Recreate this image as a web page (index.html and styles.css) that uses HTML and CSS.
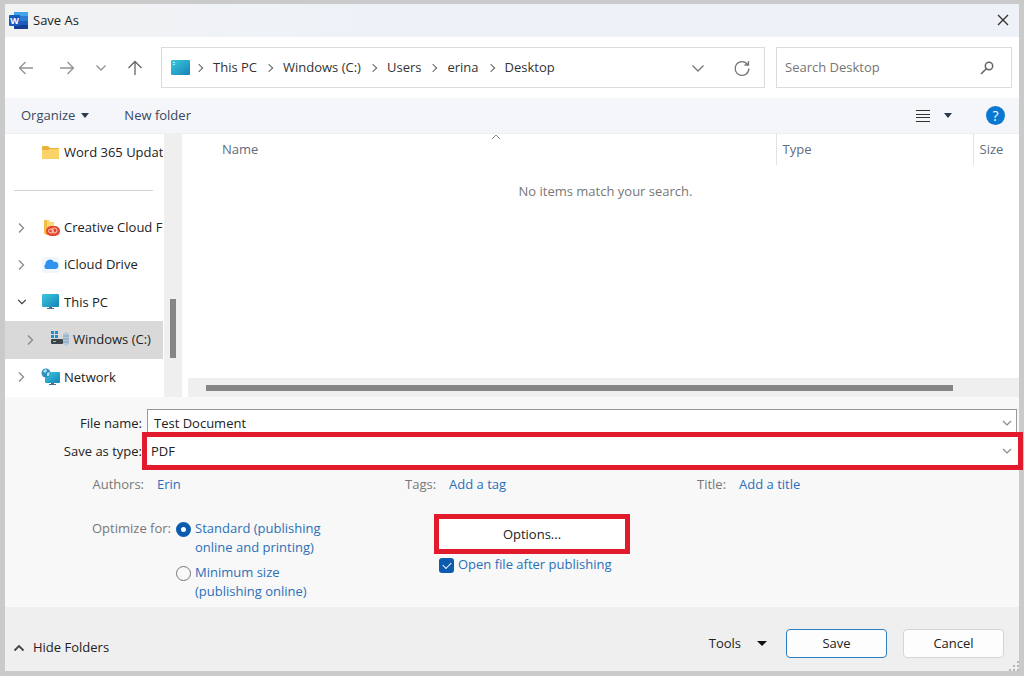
FILE: index.html
```html
<!DOCTYPE html>
<html lang="en">
<head>
  <meta charset="UTF-8" />
  <meta name="viewport" content="width=device-width, initial-scale=1.0"/>
  <title>Save As</title>
  <link rel="stylesheet" href="styles.css">
</head>
<body>
  <div class="dialog">
    <header class="titlebar">
      <svg class="word-icon" width="20" height="18" viewBox="0 0 20 18">
        <rect x="5" y="0" width="14" height="17" rx="1" fill="#1b5cbe"/>
        <path d="M6 0h12a1 1 0 0 1 1 1v4H5V1a1 1 0 0 1 1-1z" fill="#41a5ee"/>
        <rect x="5" y="4" width="14" height="5" fill="#2b7cd3"/>
        <path d="M5 13h14v3a1 1 0 0 1-1 1H6a1 1 0 0 1-1-1z" fill="#103f91"/>
        <rect x="0" y="3" width="11" height="11" rx="1" fill="#185abd"/>
        <text x="5.500" y="12" text-anchor="middle" font-size="9" font-weight="700" fill="#fff">W</text>
      </svg>
      <h1>Save As</h1>
      <button class="icon-btn close" aria-label="Close">
        <svg width="14" height="14" viewBox="0 0 14 14"><path d="M2 1l10 10M12 1L2 11" stroke="#333" stroke-width="1.400"/></svg>
      </button>
    </header>

    <nav class="navbar">
      <div class="nav-buttons">
        <button class="icon-btn back" aria-label="Back">
          <svg width="16" height="16" viewBox="0 0 16 16"><path d="M15 8H1.500M7.500 2l-6 6 6 6" stroke="#929292" stroke-width="1.300"/></svg>
        </button>
        <button class="icon-btn" aria-label="Forward">
          <svg width="16" height="16" viewBox="0 0 16 16"><path d="M1 8h13.500M8.500 2l6 6-6 6" stroke="#929292" stroke-width="1.300"/></svg>
        </button>
        <button class="icon-btn" aria-label="Recent locations">
          <svg width="16" height="16" viewBox="0 0 16 16"><path d="M3.500 5.500L8 10l4.500-4.500" stroke="#929292" stroke-width="1.300"/></svg>
        </button>
        <button class="icon-btn" aria-label="Up">
          <svg width="16" height="16" viewBox="0 0 16 16"><path d="M8 15V1.500M1.500 8L8 1.500 14.500 8" stroke="#666" stroke-width="1.300"/></svg>
        </button>
      </div>
      <div class="address">
        <svg width="19" height="16" viewBox="0 0 19 16">
          <defs>
            <linearGradient id="screen" x1="0" y1="0" x2="1" y2="1">
              <stop offset="0" stop-color="#3cc8de"/><stop offset="1" stop-color="#1584b8"/>
            </linearGradient>
          </defs>
          <rect x="0" y="0" width="19" height="15" rx="1" fill="url(#screen)"/>
          <path d="M2 2h2v1H2zM2 4h2v1H2z" fill="#a9eef8"/>
        </svg>
        <ol class="crumbs">
          <li><a href="#">This PC</a></li>
          <li><a href="#">Windows (C:)</a></li>
          <li><a href="#">Users</a></li>
          <li><a href="#">erina</a></li>
          <li><a href="#">Desktop</a></li>
        </ol>
        <button class="icon-btn" aria-label="Previous locations">
          <svg width="16" height="16" viewBox="0 0 16 16"><path d="M2.500 5.500L8 11l5.500-5.500" stroke="#777" stroke-width="1.300"/></svg>
        </button>
        <button class="icon-btn" aria-label="Refresh">
          <svg width="18" height="18" viewBox="0 0 18 18"><path d="M15.900 9.500A6.900 6.900 0 1 1 14.600 5.500M15.500 2v4H11.500" stroke="#777" stroke-width="1.300"/></svg>
        </button>
      </div>
      <div class="search">
        <input type="text" placeholder="Search Desktop" aria-label="Search Desktop">
        <svg width="14" height="14" viewBox="0 0 14 14"><circle cx="9" cy="5" r="3.700" stroke="#666" stroke-width="1.500"/><path d="M6.300 7.700L1 13" stroke="#666" stroke-width="1.600"/></svg>
      </div>
    </nav>

    <div class="toolbar">
      <button class="text-btn">Organize <span class="caret"></span></button>
      <button class="text-btn">New folder</button>
      <button class="icon-btn view" aria-label="Change view">
        <svg width="14" height="14" viewBox="0 0 14 14"><path d="M0 1.500h14M0 5.500h14M0 8.500h14M0 12.500h14" stroke="#333" stroke-width="1.100"/></svg>
        <span class="caret"></span>
      </button>
      <button class="help" aria-label="Help">?</button>
    </div>

    <main class="browser">
      <ul class="tree">
        <li class="pinned">
          <svg width="20" height="18" viewBox="0 0 20 18">
            <path d="M1 3a1 1 0 0 1 1-1h5l2 2h8a1 1 0 0 1 1 1v10H1z" fill="#e9b03a"/>
            <path d="M1 6h6l2-1h9v9a1 1 0 0 1-1 1H2a1 1 0 0 1-1-1z" fill="#fbd267"/>
          </svg>
          <span>Word 365 Updates</span>
        </li>
        <li class="divider"><hr></li>
        <li>
          <svg class="arrow" width="10" height="12" viewBox="0 0 10 12"><path d="M2 1.500L6.500 6 2 10.500"/></svg>
          <svg width="20" height="18" viewBox="0 0 20 18">
            <path d="M3 1h5l1 2h4v13H5l-2-2z" fill="#fbd774"/>
            <path d="M3 1h3v15l-3-2z" fill="#f3bd48"/>
            <rect x="5" y="7" width="14" height="10" rx="5" fill="#e4472f"/>
            <ellipse cx="10" cy="12" rx="2.500" ry="2" stroke="#fbd0c6"/>
            <ellipse cx="13.500" cy="11.500" rx="2.500" ry="2.500" stroke="#fbd0c6"/>
          </svg>
          <span>Creative Cloud Files</span>
        </li>
        <li>
          <svg class="arrow" width="10" height="12" viewBox="0 0 10 12"><path d="M2 1.500L6.500 6 2 10.500"/></svg>
          <svg width="20" height="18" viewBox="0 0 20 18">
            <rect x="1" y="1" width="17" height="16" rx="2" fill="#f1f6fb"/>
            <path d="M5 13a3 3 0 0 1-.5-5 4.500 4.500 0 0 1 8.500-2 3.500 3.500 0 0 1 1.500 7z" fill="#2d93ee"/>
          </svg>
          <span>iCloud Drive</span>
        </li>
        <li>
          <svg class="arrow open" width="12" height="10" viewBox="0 0 12 10"><path d="M1.500 2.500L6 7l4.500-4.500"/></svg>
          <svg width="20" height="18" viewBox="0 0 20 18">
            <rect x="1" y="1" width="17" height="13" rx="1" fill="url(#screen)"/>
            <path d="M8 14h3v1h2v1H6v-1h2z" fill="#4b6f86"/>
          </svg>
          <span>This PC</span>
        </li>
        <li class="child selected">
          <svg class="arrow" width="10" height="12" viewBox="0 0 10 12"><path d="M2 1.500L6.500 6 2 10.500"/></svg>
          <svg width="20" height="18" viewBox="0 0 20 18">
            <path d="M1 0h3v3H1zM5 0h3v3H5zM1 4h3v3H1zM5 4h3v3H5z" fill="#1b8fd0"/>
            <rect x="1" y="8" width="12" height="5" rx="1" fill="#3d4449"/>
            <rect x="3" y="10" width="3" height="1" fill="#7fd6a4"/>
            <path d="M13 3l3-2 3 2v10l-3 2-3-2z" fill="#b4c9da"/>
            <path d="M13 5h6M13 8h6M13 11h6" stroke="#7c9fbc"/>
          </svg>
          <span>Windows (C:)</span>
        </li>
        <li>
          <svg class="arrow" width="10" height="12" viewBox="0 0 10 12"><path d="M2 1.500L6.500 6 2 10.500"/></svg>
          <svg width="20" height="18" viewBox="0 0 20 18">
            <rect x="4" y="4" width="15" height="11" rx="1" fill="url(#screen)"/>
            <path d="M10 15h3v1h2v1H8v-1h2z" fill="#4b6f86"/>
            <circle cx="5" cy="5" r="4.500" fill="#2f8fc0"/>
            <path d="M2 3l3-2 1 2-2 2zM6 5l3-1-1 4-2 0z" fill="#b3e3f0"/>
          </svg>
          <span>Network</span>
        </li>
      </ul>
      <div class="vscroll"><span class="vthumb"></span></div>
      <div class="files">
        <table>
          <thead>
            <tr>
              <th class="col-name">
                <span>Name</span>
                <svg class="sort" width="10" height="6" viewBox="0 0 10 6"><path d="M1 5l4-4 4 4" stroke="#888"/></svg>
              </th>
              <th class="col-type"><span>Type</span></th>
              <th class="col-size"><span>Size</span></th>
            </tr>
          </thead>
          <tbody>
            <tr><td colspan="3">No items match your search.</td></tr>
          </tbody>
        </table>
        <div class="hscroll"><span class="hthumb"></span></div>
      </div>
    </main>

    <form class="details">
      <div class="field">
        <label for="filename">File name:</label>
        <div class="box name-box">
          <input type="text" id="filename" value="Test Document">
          <svg width="10" height="8" viewBox="0 0 10 8"><path d="M1 2l4 4 4-4" stroke="#888" stroke-width="1.200"/></svg>
        </div>
      </div>
      <div class="field">
        <label for="filetype">Save as type:</label>
        <div class="box type-box highlight">
          <select id="filetype"><option>PDF</option></select>
          <svg width="10" height="8" viewBox="0 0 10 8"><path d="M1 2l4 4 4-4" stroke="#888" stroke-width="1.200"/></svg>
        </div>
      </div>

      <div class="columns meta">
        <div class="pair first"><span class="label">Authors:</span> <a href="#">Erin</a></div>
        <div class="pair"><span class="label">Tags:</span> <a href="#">Add a tag</a></div>
        <div class="pair"><span class="label">Title:</span> <a href="#">Add a title</a></div>
      </div>

      <div class="columns publish">
        <div class="optimize">
          <span class="label" id="optimize">Optimize for:</span>
          <div class="radios" role="radiogroup" aria-labelledby="optimize">
            <label><input type="radio" name="quality" checked><span>Standard (publishing<br>online and printing)</span></label>
            <label><input type="radio" name="quality"><span>Minimum size<br>(publishing online)</span></label>
          </div>
        </div>
        <div class="export">
          <button type="button" class="options highlight">Options...</button>
          <label><input type="checkbox" checked><span>Open file after publishing</span></label>
        </div>
      </div>
    </form>

    <footer class="footer">
      <button class="text-btn hide">
        <svg width="12" height="10" viewBox="0 0 12 10"><path d="M1.500 7.500L6 3l4.500 4.500" stroke="#444" stroke-width="1.800"/></svg>
        Hide Folders
      </button>
      <button class="text-btn tools">Tools <span class="caret"></span></button>
      <button class="btn primary">Save</button>
      <button class="btn">Cancel</button>
      <svg class="grip" width="10" height="10" viewBox="0 0 10 10"><path d="M8 0h2v2H8zM4 4h2v2H4zM8 4h2v2H8zM0 8h2v2H0zM4 8h2v2H4zM8 8h2v2H8z" fill="#b5b5b5"/></svg>
    </footer>
  </div>
</body>
</html>
```
FILE: styles.css
```css
* {
  margin: 0;
  padding: 0;
  box-sizing: border-box;
}

body {
  background: #cacaca;
  color: #222;
  font-family: "Open Sans", "Noto Sans", sans-serif;
  font-size: 13px;
  line-height: 19px;
  min-height: 100vh;
  padding: 4px 5px 5px;
  display: flex;
}

button,
input,
select {
  font: inherit;
  color: inherit;
  background: none;
  border: none;
  outline: none;
}

a {
  color: #2a70b8;
  text-decoration: none;
}

ul,
ol {
  list-style: none;
}

svg {
  fill: none;
  flex-shrink: 0;
}

.dialog {
  flex: 1;
  min-width: 0;
  display: flex;
  flex-direction: column;
  background: #fff;
}

.icon-btn,
.text-btn {
  display: flex;
  align-items: center;
}

.caret {
  border: 4px solid transparent;
  border-top: 5px solid #2c3a50;
  border-bottom: none;
}

/* Title bar */
.titlebar {
  display: flex;
  align-items: center;
  height: 33px;
  padding: 0 9px 0 4px;
  background: linear-gradient(90deg, #f2f2f2, #eef2f8 35%);
}

.titlebar h1 {
  font-size: 13px;
  font-weight: 400;
  margin-left: 4px;
}

.close {
  margin-left: auto;
}

/* Navigation */
.navbar {
  display: flex;
  padding: 10px 7px 10px 13px;
}

.nav-buttons {
  display: flex;
  align-items: center;
  gap: 18px;
  width: 127px;
  margin-right: 16px;
}

.back {
  margin-right: 7px;
}

.address {
  flex: 1;
  display: flex;
  align-items: center;
  height: 41px;
  padding: 0 13px 0 9px;
  margin-right: 11px;
  border: 1px solid #dcdcdc;
}

.address .icon-btn {
  margin-left: 27px;
}

.crumbs {
  display: flex;
  flex: 1;
}

.crumbs li {
  display: flex;
  align-items: center;
}

.crumbs li::before {
  content: "";
  width: 5px;
  height: 5px;
  margin: 0 11px 0 9px;
  border: solid #666;
  border-width: 1px 1px 0 0;
  transform: rotate(45deg);
}

.crumbs li:first-child::before {
  margin-left: 6px;
}

.crumbs a {
  color: #333;
}

.search {
  display: flex;
  align-items: center;
  width: 236px;
  height: 41px;
  padding: 0 17px 0 8px;
  border: 1px solid #dcdcdc;
}

.search input {
  flex: 1;
  min-width: 0;
}

.search input::placeholder {
  color: #767676;
}

/* Toolbar */
.toolbar {
  display: flex;
  align-items: center;
  height: 36px;
  padding: 0 14px 0 16px;
  background: #f4f6f9;
  border-bottom: 1px solid #edeff1;
}

.toolbar .text-btn {
  color: #37495f;
  gap: 6px;
  margin-right: 35px;
}

.view {
  gap: 14px;
  margin-left: auto;
  margin-right: 34px;
}

.help {
  width: 19px;
  height: 19px;
  border-radius: 50%;
  background: #0a78d0;
  color: #fff;
  font-size: 14px;
}

/* Folder tree and file list */
.browser {
  flex: 1;
  display: flex;
  min-height: 263px;
}

.tree {
  display: grid;
  grid-template-rows: repeat(7, 1fr);
  width: 158px;
  padding-bottom: 1px;
  overflow: hidden;
}

.tree li {
  display: flex;
  align-items: center;
  gap: 3px;
  padding-left: 12px;
  white-space: nowrap;
  overflow: hidden;
}

.tree .arrow {
  width: 10px;
  margin-right: 11px;
  stroke: #888;
  stroke-width: 1.3;
}

.tree .open {
  stroke: #333;
}

.tree .pinned {
  padding-left: 36px;
}

.tree .child {
  padding-left: 21px;
}

.tree .selected {
  background: #d9d9d9;
}

.tree .divider {
  padding: 0 10px 0 9px;
}

.divider hr {
  flex: 1;
  border: none;
  border-top: 1px solid #d2d2d2;
}

.vscroll {
  width: 18px;
  margin-left: 1px;
  margin-right: 1px;
  padding: 165px 6px 38px;
  background: #efefef;
}

.vthumb {
  display: block;
  height: 59px;
  background: #858585;
}

.files {
  flex: 1;
  display: flex;
  flex-direction: column;
  justify-content: space-between;
  padding-left: 5px;
}

.files table {
  margin-left: 28px;
  table-layout: fixed;
  border-collapse: collapse;
}

.files th {
  position: relative;
  height: 31px;
  padding-left: 6px;
  text-align: left;
  font-weight: 400;
  color: #5f6d7e;
}

.col-type,
.col-size {
  border-left: 1px solid #e3e3e3;
}

.col-type {
  width: 197px;
}

.col-size {
  width: 46px;
}

.sort {
  position: absolute;
  top: 0;
  left: calc(50% - 5px);
}

.files td {
  padding: 17px 24px 0 0;
  text-align: center;
  color: #777;
}

.hscroll {
  height: 19px;
  padding: 7px 66px 6px 18px;
  background: #efefef;
}

.hthumb {
  display: block;
  height: 6px;
  background: #858585;
}

/* Save details */
.details {
  padding: 12px 0 6px;
  background: #f8f8f8;
}

.field {
  display: flex;
  align-items: center;
}

.field > label {
  width: 137px;
  text-align: right;
}

.box {
  flex: 1;
  display: flex;
  align-items: center;
  height: 28px;
  padding-right: 5px;
  background: #fff;
}

.box input,
.box select {
  flex: 1;
  appearance: none;
}

.name-box {
  margin: 0 2px 0 5px;
  padding-left: 6px;
  padding-right: 4px;
  border: 1px solid #999;
}

.type-box {
  margin: 0 1px 0 5px;
  padding-left: 4px;
  padding-right: 6px;
}

/* red frames drawn over the neighbouring content */
.highlight {
  position: relative;
  outline: 5px solid #e11b2c;
}

.label {
  color: #777;
}

.columns {
  display: grid;
  grid-template-columns: 400fr 292fr 322fr;
}

.meta {
  margin-top: 10px;
}

.pair {
  display: flex;
  gap: 13px;
}

.first .label {
  width: 139px;
  text-align: right;
}

.publish {
  margin-top: 25px;
}

.publish label {
  display: flex;
  gap: 4px;
  color: #2a70b8;
}

.optimize {
  display: flex;
  gap: 5px;
}

.optimize .label {
  width: 166px;
  text-align: right;
}

.radios {
  display: grid;
  gap: 6px;
}

.radios input,
.export input {
  appearance: none;
  width: 15px;
  height: 15px;
  margin-top: 3px;
  flex-shrink: 0;
}

.radios input {
  border: 1px solid #777;
  border-radius: 50%;
}

.radios input:checked {
  border: 5px solid #0b5cad;
  background: #fff;
}

.export {
  padding-left: 34px;
}

.options {
  display: block;
  width: 186px;
  height: 30px;
  background: #fff;
}

.export label {
  margin-top: 6px;
}

.export input {
  border-radius: 3px;
  background: #0b5cad;
  display: grid;
  place-items: center;
}

.export input::before {
  content: "";
  width: 7px;
  height: 4px;
  margin-bottom: 2px;
  border: solid #fff;
  border-width: 0 0 1px 1px;
  transform: rotate(-45deg);
}

/* Footer */
.footer {
  position: relative;
  display: flex;
  align-items: center;
  height: 64px;
  padding: 9px 15px 0 8px;
  background: #efefef;
}

.hide {
  gap: 8px;
  margin-top: 8px;
  margin-right: auto;
}

.tools {
  gap: 16px;
  margin-right: 19px;
}

.tools .caret {
  border-width: 5px 5px 0;
  border-top-color: #111;
}

.btn {
  width: 101px;
  height: 29px;
  background: #fdfdfd;
  border: 1px solid #d5d5d5;
  border-radius: 4px;
}

.primary {
  margin-right: 16px;
  border-color: #2b7fc0;
}

.grip {
  position: absolute;
  right: 0;
  bottom: 0;
}
```
